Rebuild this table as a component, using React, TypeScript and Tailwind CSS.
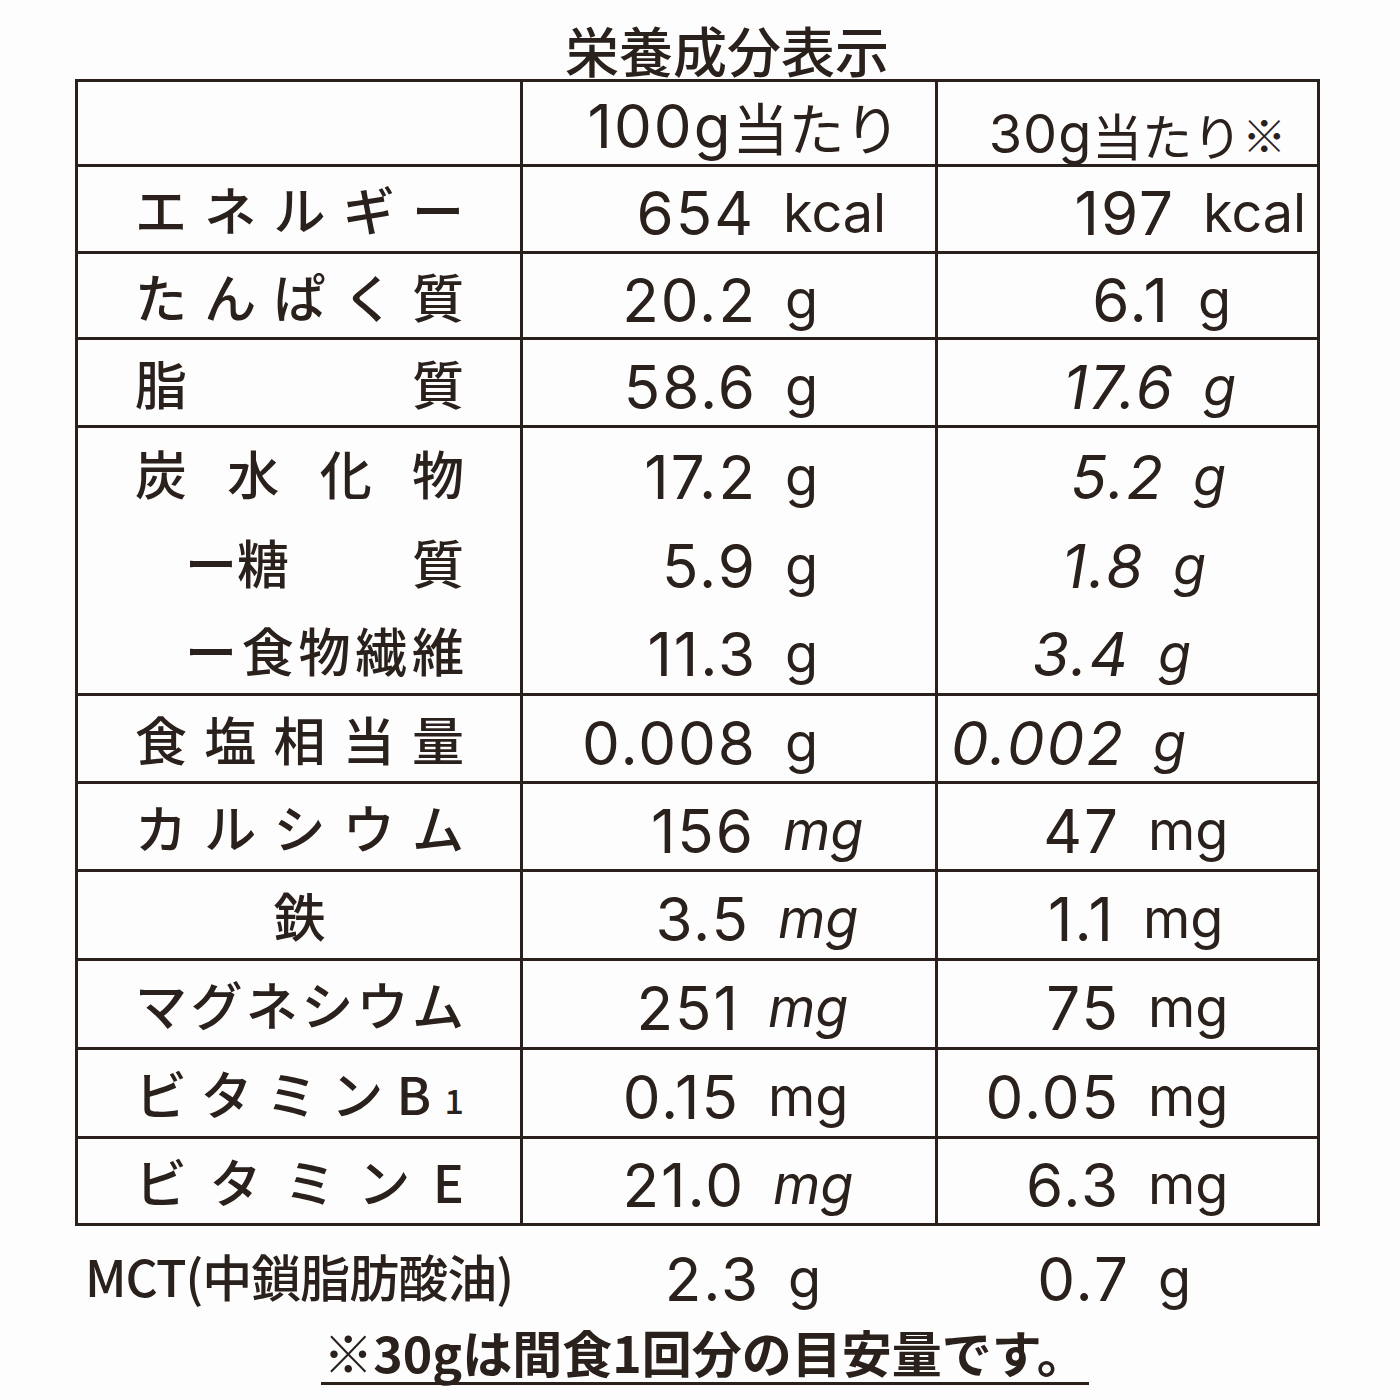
import React from "react";

type Row = {
	label: string[];
	labelPad?: string;
	justify?: string;
	v1: string;
	u1: string;
	w1: string;
	v2: string;
	u2: string;
	w2: string;
	h: string;
	i1?: boolean;
	i2?: boolean;
};

const INK = "text-[#2a211c]";

// 炭水化物 group rows share one bordered block
const carbRows: Row[] = [
	{ label: ["炭", "水", "化", "物"], v1: "17.2", u1: "g", w1: "w-[234px]", v2: "5.2", u2: "g", w2: "w-[227px]", h: "h-[89px]", i2: true },
	{ label: ["ー糖", "質"], labelPad: "pl-[107px]", v1: "5.9", u1: "g", w1: "w-[234px]", v2: "1.8", u2: "g", w2: "w-[207px]", h: "h-[89px]", i2: true },
	{ label: ["ー", "食", "物", "繊", "維"], labelPad: "pl-[107px]", v1: "11.3", u1: "g", w1: "w-[234px]", v2: "3.4", u2: "g", w2: "w-[192px]", h: "h-[87px]", i2: true },
];

const topRows: Row[] = [
	{ label: ["エ", "ネ", "ル", "ギ", "ー"], v1: "654", u1: "kcal", w1: "w-[232px]", v2: "197", u2: "kcal", w2: "w-[237px]", h: "h-[87px]" },
	{ label: ["た", "ん", "ぱ", "く", "質"], v1: "20.2", u1: "g", w1: "w-[234px]", v2: "6.1", u2: "g", w2: "w-[232px]", h: "h-[86px]" },
	{ label: ["脂", "質"], v1: "58.6", u1: "g", w1: "w-[234px]", v2: "17.6", u2: "g", w2: "w-[237px]", h: "h-[88px]", i2: true },
];

const bottomRows: Row[] = [
	{ label: ["食", "塩", "相", "当", "量"], v1: "0.008", u1: "g", w1: "w-[234px]", v2: "0.002", u2: "g", w2: "w-[187px]", h: "h-[88px]", i2: true },
	{ label: ["カ", "ル", "シ", "ウ", "ム"], v1: "156", u1: "mg", w1: "w-[232px]", v2: "47", u2: "mg", w2: "w-[182px]", h: "h-[88px]", i1: true },
	{ label: ["鉄"], justify: "justify-center", v1: "3.5", u1: "mg", w1: "w-[227px]", v2: "1.1", u2: "mg", w2: "w-[177px]", h: "h-[89px]", i1: true },
	{ label: ["マ", "グ", "ネ", "シ", "ウ", "ム"], v1: "251", u1: "mg", w1: "w-[217px]", v2: "75", u2: "mg", w2: "w-[182px]", h: "h-[89px]", i1: true },
	{ label: ["ビ", "タ", "ミ", "ン", "B", "1"], v1: "0.15", u1: "mg", w1: "w-[217px]", v2: "0.05", u2: "mg", w2: "w-[182px]", h: "h-[89px]" },
	{ label: ["ビ", "タ", "ミ", "ン", "E"], v1: "21.0", u1: "mg", w1: "w-[222px]", v2: "6.3", u2: "mg", w2: "w-[182px]", h: "h-[84px]", i1: true },
];

const Label = ({ row }: { row: Row }) => (
	<div
		className={`flex items-center h-full pr-[56px] ${row.labelPad ?? "pl-[57px]"} ${row.justify ?? "justify-between"} text-[52px] font-medium`}
	>
		{row.label.map((c, i) =>
			c === "1" ? (
				<span key={i} className="text-[34px] self-center mt-[14px]">
					{c}
				</span>
			) : (
				<span key={i}>{c}</span>
			)
		)}
	</div>
);

const Value = ({ v, u, w, italic }: { v: string; u: string; w: string; italic?: boolean }) => (
	<div className="flex items-center h-full pt-[8px] font-['Inter',sans-serif]">
		<span className={`${w} text-right text-[60px] tracking-[2px] ${italic && u === "g" ? "italic" : ""}`}>{v}</span>
		<span className={`ml-[28px] text-[54px] ${italic ? "italic" : ""}`}>{u}</span>
	</div>
);

const TableRow = ({ row, last }: { row: Row; last?: boolean }) => (
	<div className={`flex ${row.h} ${last ? "" : "border-b-[3px] border-[#2a211c]"}`}>
		<div className="w-[445px] border-r-[3px] border-[#2a211c]">
			<Label row={row} />
		</div>
		<div className="w-[415px] border-r-[3px] border-[#2a211c]">
			<Value v={row.v1} u={row.u1} w={row.w1} italic={row.i1} />
		</div>
		<div className="flex-1">
			<Value v={row.v2} u={row.u2} w={row.w2} italic={row.i2} />
		</div>
	</div>
);

export default function App() {
	return (
		<div
			className={`w-[1400px] h-[1400px] bg-[#fdfdfd] ${INK} overflow-hidden font-['Noto_Sans_CJK_JP','Noto_Sans',sans-serif] leading-none`}
		>
			{/* title */}
			<div className="h-[79px] pt-[22px] pl-[565px] text-[54px] font-medium leading-[56px]">栄養成分表示</div>

			{/* table */}
			<div className="ml-[75px] w-[1245px] border-[3px] border-[#2a211c]">
				<div className="flex h-[85px] border-b-[3px] border-[#2a211c]">
					<div className="w-[445px] border-r-[3px] border-[#2a211c]" />
					<div className="w-[415px] border-r-[3px] border-[#2a211c] flex items-center justify-center pl-[30px] pt-[6px] text-[56px]">
						<span className="tracking-[2px] text-[60px] font-['Inter',sans-serif]">100g</span>
						<span>当たり</span>
					</div>
					<div className="flex-1 flex items-center justify-center pl-[20px] pt-[22px] text-[50px]">
						<span className="tracking-[1px] text-[54px] font-['Inter',sans-serif]">30g</span>
						<span>当たり</span>
						<span className="text-[44px]">※</span>
					</div>
				</div>

				{topRows.map((r) => (
					<TableRow key={r.v1} row={r} />
				))}

				<div className="flex border-b-[3px] border-[#2a211c]">
					<div className="w-[445px] border-r-[3px] border-[#2a211c]">
						{carbRows.map((r) => (
							<div key={r.v1} className={r.h}>
								<Label row={r} />
							</div>
						))}
					</div>
					<div className="w-[415px] border-r-[3px] border-[#2a211c]">
						{carbRows.map((r) => (
							<div key={r.v1} className={r.h}>
								<Value v={r.v1} u={r.u1} w={r.w1} italic={r.i1} />
							</div>
						))}
					</div>
					<div className="flex-1">
						{carbRows.map((r) => (
							<div key={r.v1} className={r.h}>
								<Value v={r.v2} u={r.u2} w={r.w2} italic={r.i2} />
							</div>
						))}
					</div>
				</div>

				{bottomRows.map((r, i) => (
					<TableRow key={r.v1} row={r} last={i === bottomRows.length - 1} />
				))}
			</div>

			{/* MCT */}
			<div className="flex items-center h-[98px]">
				<div className="w-[448px] pl-[10px] ml-[75px] text-[50px] font-medium tracking-[-1px]">
					MCT(中鎖脂肪酸油)
				</div>
				<div className="w-[415px]">
					<Value v="2.3" u="g" w="w-[237px]" />
				</div>
				<div className="flex-1">
					<Value v="0.7" u="g" w="w-[192px]" />
				</div>
			</div>

			{/* footnote */}
			<div className="flex justify-center pl-[10px]">
				<span className="text-[50px] font-semibold leading-[54px] pb-[4px] border-b-[3px] border-[#2a211c] px-[2px]">
					※30gは間食1回分の目安量です。
				</span>
			</div>
		</div>
	);
}
